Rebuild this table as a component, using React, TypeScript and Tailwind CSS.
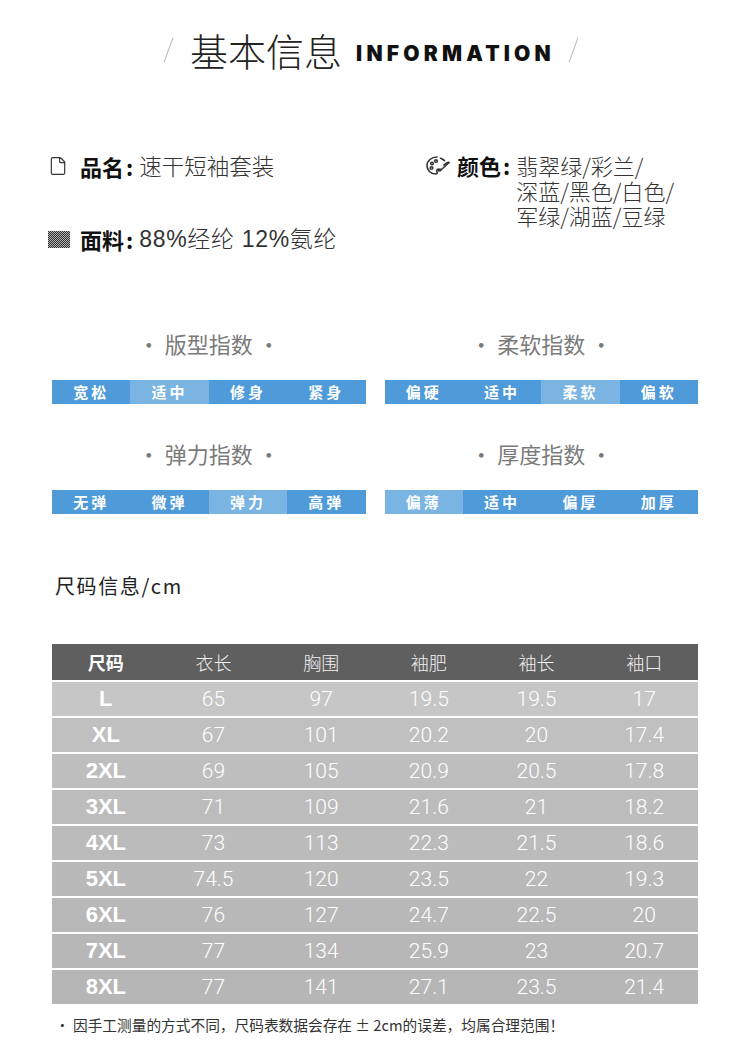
import { File } from 'lucide-react';

const CJK = "font-['Noto_Sans_CJK_SC','Noto_Sans',sans-serif]";
const MIXED = "font-['Liberation_Sans','Noto_Sans_CJK_SC',sans-serif]";

type Index = { title: string; items: string[]; active: number };

const indexes: Index[] = [
  { title: '版型指数', items: ['宽松', '适中', '修身', '紧身'], active: 1 },
  { title: '柔软指数', items: ['偏硬', '适中', '柔软', '偏软'], active: 2 },
  { title: '弹力指数', items: ['无弹', '微弹', '弹力', '高弹'], active: 2 },
  { title: '厚度指数', items: ['偏薄', '适中', '偏厚', '加厚'], active: 0 },
];

const headers = ['尺码', '衣长', '胸围', '袖肥', '袖长', '袖口'];

const rows = [
  ['L', '65', '97', '19.5', '19.5', '17'],
  ['XL', '67', '101', '20.2', '20', '17.4'],
  ['2XL', '69', '105', '20.9', '20.5', '17.8'],
  ['3XL', '71', '109', '21.6', '21', '18.2'],
  ['4XL', '73', '113', '22.3', '21.5', '18.6'],
  ['5XL', '74.5', '120', '23.5', '22', '19.3'],
  ['6XL', '76', '127', '24.7', '22.5', '20'],
  ['7XL', '77', '134', '25.9', '23', '20.7'],
  ['8XL', '77', '141', '27.1', '23.5', '21.4'],
];

// rows get a touch darker toward the bottom
const rowBg = [
  'bg-[#c6c6c6]',
  'bg-[#c0c0c0]',
  'bg-[#bebebe]',
  'bg-[#bcbcbc]',
  'bg-[#bbbbbb]',
  'bg-[#b9b9b9]',
  'bg-[#b8b8b8]',
  'bg-[#b7b7b7]',
  'bg-[#b6b6b6]',
];

const FabricIcon = () => (
  <svg width="22" height="17" viewBox="0 0 22 17">
    <defs>
      <pattern id="chk" width="2" height="2" patternUnits="userSpaceOnUse">
        <rect width="1" height="1" fill="#333" />
        <rect x="1" y="1" width="1" height="1" fill="#333" />
        <rect x="1" y="0" width="1" height="1" fill="#b0b0b0" />
        <rect x="0" y="1" width="1" height="1" fill="#b0b0b0" />
      </pattern>
    </defs>
    <rect width="22" height="17" fill="url(#chk)" />
  </svg>
);

const PaletteIcon = () => (
  <svg width="26" height="22" viewBox="0 0 26 22" fill="none" stroke="#333" strokeWidth="1.6" strokeLinecap="round" strokeLinejoin="round">
    <path d="M12 2C6.5 2 2 5.8 2 10.6c0 4.4 3.6 8.4 8.6 8.4 1.6 0 2-1 1.4-2.2-.6-1.2-.2-2.4 1.4-2.4h2.4" />
    <path d="M15.5 3.2c1.6.5 3 1.3 4 2.4" />
    <circle cx="7" cy="8.5" r="1.3" />
    <circle cx="11" cy="6" r="1.3" />
    <circle cx="6.5" cy="13" r="1.3" />
    <path d="M24 7.5 15.5 15.5c-.8.8-2 .6-2.2-.4l-.1-.8" />
    <path d="M24 7.5c-1.4-.4-3 .6-5 2.6" />
  </svg>
);

const IndexBlock = ({ data }: { data: Index }) => (
  <div className="flex flex-col">
    <div className={`flex h-[30px] items-center justify-center pb-[4px] text-[22px] text-[#7a7a7a] ${CJK}`}>
      · {data.title} ·
    </div>
    <div className="mt-[20px] grid h-[24px] grid-cols-4 bg-[#4f9ad8]">
      {data.items.map((it, i) => (
        <div
          key={it}
          className={`flex items-center justify-center text-[15px] font-bold tracking-[0.2em] text-white ${CJK} ${
            i === data.active ? 'bg-[#79b4e2]' : ''
          }`}
        >
          {it}
        </div>
      ))}
    </div>
  </div>
);

export default function App() {
  return (
    <div className={`w-[750px] bg-white pb-[20px] text-[#222] ${CJK}`}>
      {/* title */}
      <div className="flex h-[100px] items-center justify-center pr-[8px]">
        <div className="mr-[21px] h-[26px] w-px rotate-[20deg] bg-[#bbb]" />
        <span className="text-[38px] font-light leading-none text-[#222]">基本信息</span>
        <span className="ml-[14px] mt-[6px] font-['Inter',sans-serif] text-[21px] font-black leading-none tracking-[0.2em] text-[#111]">
          INFORMATION
        </span>
        <div className="ml-[18px] h-[26px] w-px rotate-[20deg] bg-[#bbb]" />
      </div>

      {/* info */}
      <div className="flex pt-[53px]">
        <div className="ml-[48px] flex w-[377px] flex-col">
          <div className="flex h-[26px] items-center">
            <File className="h-[20px] w-[20px] text-[#333]" strokeWidth={1.4} />
            <span className="ml-[12px] text-[22px] font-bold text-[#111]">品名</span>
            <span className="ml-[2px] text-[22px] font-bold text-[#111]">:</span>
            <span className="ml-[6px] text-[22.5px] font-light text-[#333]">速干短袖套装</span>
          </div>
          <div className="mt-[47px] flex h-[26px] items-center">
            <FabricIcon />
            <span className="ml-[10px] text-[22px] font-bold text-[#111]">面料</span>
            <span className="ml-[2px] text-[22px] font-bold text-[#111]">:</span>
            <span className={`ml-[6px] text-[23px] font-light tracking-[0.03em] text-[#333] ${MIXED}`}>88%经纶 12%氨纶</span>
          </div>
        </div>
        <div className="flex">
          <div className="flex h-[25px] items-center">
            <PaletteIcon />
            <span className="ml-[6px] text-[22px] font-bold text-[#111]">颜色</span>
            <span className="ml-[2px] text-[22px] font-bold text-[#111]">:</span>
          </div>
          <div className="ml-[6px] flex flex-col text-[22px] font-light leading-[25px] text-[#333]">
            <span className="block h-[25px]">翡翠绿/彩兰/</span>
            <span className="block h-[25px]">深蓝/黑色/白色/</span>
            <span className="block h-[25px]">军绿/湖蓝/豆绿</span>
          </div>
        </div>
      </div>

      {/* indexes */}
      <div className="mt-[78px] grid grid-cols-2 gap-x-[19px] gap-y-[36px] px-[52px]">
        {indexes.map((d) => (
          <IndexBlock key={d.title} data={d} />
        ))}
      </div>

      {/* size info */}
      <div className="ml-[55px] mt-[58px] flex h-[28px] items-center text-[20px] tracking-[0.08em] text-[#222]">
        尺码信息/cm
      </div>

      <div className="mx-[52px] mt-[44px]">
        <div className="grid h-[36px] grid-cols-6 bg-[#5f5f5f] text-[18px] text-[#f2f2f2]">
          {headers.map((h, i) => (
            <div key={h} className={`flex items-center justify-center ${i === 0 ? 'font-bold text-white' : 'font-light'}`}>
              {h}
            </div>
          ))}
        </div>
        {rows.map((r, ri) => (
          <div key={r[0]} className={`grid h-[36px] grid-cols-6 border-t-2 border-white text-white ${rowBg[ri]}`}>
            {r.map((c, ci) => (
              <div
                key={ci}
                className={`flex items-center justify-center leading-none ${
                  ci === 0
                    ? "font-['Liberation_Sans',sans-serif] text-[22px] font-bold"
                    : "font-['Roboto',sans-serif] text-[21px] font-light"
                }`}
              >
                {c}
              </div>
            ))}
          </div>
        ))}
      </div>

      <div className="ml-[55px] mt-[10px] text-[14.7px] leading-[22px] text-[#333]">
        · 因手工测量的方式不同，尺码表数据会存在 ± 2cm的误差，均属合理范围！
      </div>
    </div>
  );
}
